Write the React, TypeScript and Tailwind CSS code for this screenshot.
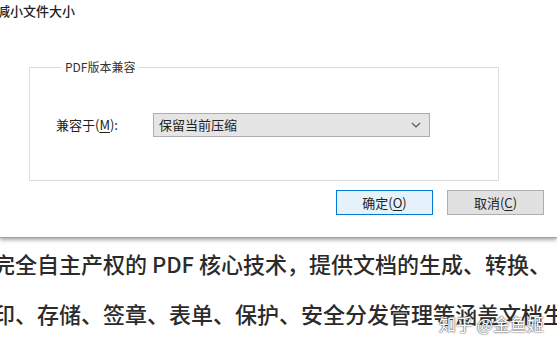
import React from "react"

const cjk = "font-['Microsoft_YaHei','Noto_Sans_CJK_SC',sans-serif]"

function Underlined({ ch }: { ch: string }) {
    return <span className="underline underline-offset-2">{ch}</span>
}

function Chevron() {
    return <svg width="10" height="6" viewBox="0 0 10 6" fill="none">
        <path d="M1 1l4 4 4-4" stroke="#555" strokeWidth="1.1" />
    </svg>
}

export default function App() {
    return <div className={`w-[557px] h-[347px] overflow-hidden bg-white ${cjk}`}>
        {/* dialog */}
        <div className="h-[238px] bg-white border-b border-[#a0a0a0] shadow-[0_2px_4px_rgba(0,0,0,0.35)] relative z-10">
            <div className="h-[20px] leading-[20px] text-[13px] font-medium text-[#222] -ml-[3px] pt-[1px]">减小文件大小</div>

            <fieldset className="ml-[29px] mt-[39px] w-[470px] border border-[#dcdcdc] pt-[38px] pb-[43px] pl-[26px]">
                <legend className="ml-[6px] px-[3px] text-[12px] leading-[16px] text-[#333]">PDF版本兼容</legend>
                <div className="flex items-center">
                    <div className="w-[97px] text-[13px] text-[#222]">兼容于(<Underlined ch="M" />):</div>
                    <div className="w-[277px] h-[24px] bg-[#e5e5e5] border border-[#adadad] flex items-center justify-between pl-[5px] pr-[8px]">
                        <span className="text-[13px] text-[#222]">保留当前压缩</span>
                        <Chevron />
                    </div>
                </div>
            </fieldset>

            <div className="flex justify-end gap-[14px] mt-[9px] pr-[13px]">
                <div className="w-[97px] h-[25px] border border-[#0078d7] bg-[#e5f1fb] flex items-center justify-center text-[13px] text-[#222]">确定(<Underlined ch="O" />)</div>
                <div className="w-[97px] h-[25px] border border-[#adadad] bg-[#e1e1e1] flex items-center justify-center text-[13px] text-[#222]">取消(<Underlined ch="C" />)</div>
            </div>
        </div>

        {/* document text */}
        <div className="relative text-[22px] leading-[50px] font-medium text-[#2b2b2b] whitespace-nowrap -ml-[7px]">
            <div>完全自主产权的 PDF 核心技术，提供文档的生成、转换、</div>
            <div>印、存储、签章、表单、保护、安全分发管理等涵盖文档生</div>
            <div className="absolute left-[446px] top-[75px] text-[17px] leading-[22px] font-normal text-white [text-shadow:0_0_2px_#444,0_0_1px_#555]">知乎 @金鱼姬</div>
        </div>
    </div>
}
